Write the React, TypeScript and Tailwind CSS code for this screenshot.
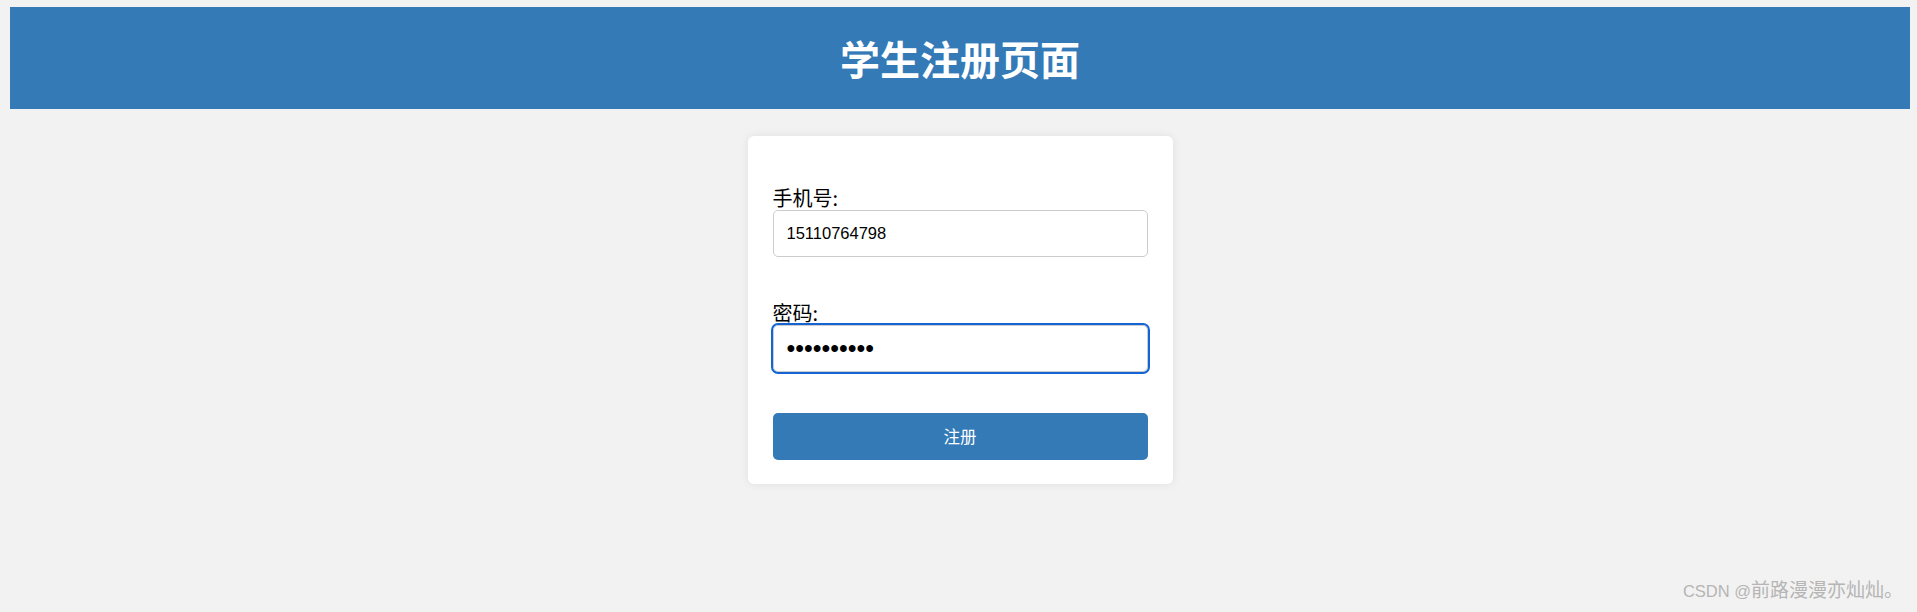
export default function App() {
  const cjk = { fontFamily: '"Noto Sans CJK SC", "Liberation Sans", sans-serif' }

  return (
    <main className="relative h-[612px] overflow-hidden bg-[#f2f2f2] pt-[7px] text-black" style={cjk}>
      {/* Header */}
      <header className="ml-[10px] mr-[7px] flex h-[102px] items-center justify-center bg-[#337ab7]">
        <h1 className="text-[40px] font-bold leading-none text-white">学生注册页面</h1>
      </header>

      {/* Form card */}
      <div className="ml-[10px] mr-[7px] mt-[27px] flex justify-center">
        <form className="w-[425px] rounded-[6px] bg-white px-[25px] pb-[24px] pt-[49px] shadow-[0_0_10px_rgba(0,0,0,0.08)]">
          <label className="block h-[25px] text-[20px] leading-[25px]">手机号:</label>
          <input
            type="text"
            defaultValue="15110764798"
            className="block h-[47px] w-full rounded-[5px] border border-[#cccccc] px-[13px] text-[16.5px] text-black outline-none"
            style={{ fontFamily: '"Liberation Sans", Arial, sans-serif' }}
          />

          <label className="mt-[43px] block h-[25px] text-[20px] leading-[25px]">密码:</label>
          <input
            type="password"
            defaultValue="1234567890"
            className="block h-[47px] w-full rounded-[5px] border border-[#cccccc] px-[13px] text-[25px] text-black outline-2 outline-offset-0 outline-[#1464d6] outline-solid"
            style={{ fontFamily: '"Liberation Sans", Arial, sans-serif' }}
          />

          <button
            type="button"
            className="mt-[41px] block h-[47px] w-full rounded-[5px] bg-[#337ab7] text-[16.5px] text-white"
          >
            注册
          </button>
        </form>
      </div>

      {/* Watermark */}
      <div className="absolute bottom-[8px] right-[14px] flex items-baseline text-[#b5b5b5]">
        <span className="text-[16.5px]" style={{ fontFamily: '"Liberation Sans", Arial, sans-serif' }}>CSDN @</span>
        <span className="text-[19px]">前路漫漫亦灿灿。</span>
      </div>
    </main>
  )
}
